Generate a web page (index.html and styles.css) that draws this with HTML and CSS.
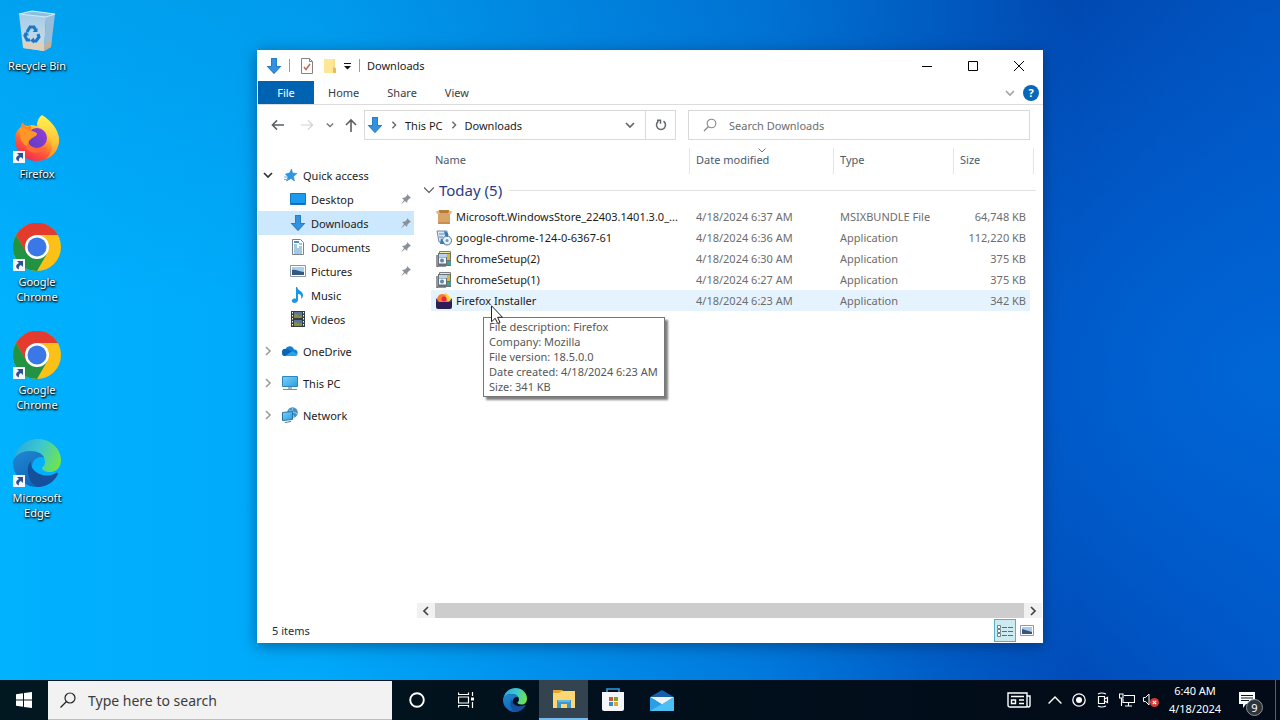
FILE: index.html
```html
<!DOCTYPE html>
<html lang="en">
<head>
<meta charset="utf-8">
<title>Downloads</title>
<link rel="stylesheet" href="styles.css">
</head>
<body>
<svg class="defs" aria-hidden="true">
  <defs>
    <linearGradient id="gBin" x1="0" y1="0" x2="0" y2="1"><stop offset="0" stop-color="#a3cdea"/><stop offset=".65" stop-color="#c3d8e6"/><stop offset="1" stop-color="#d6cdc2"/></linearGradient>
    <linearGradient id="gFox" x1=".85" y1="0" x2=".2" y2="1"><stop offset="0" stop-color="#ffe94a"/><stop offset=".35" stop-color="#ffb62b"/><stop offset=".65" stop-color="#ff5a36"/><stop offset="1" stop-color="#f0205c"/></linearGradient>
    <linearGradient id="gFlame" x1="0" y1="0" x2="0" y2="1"><stop offset="0" stop-color="#fff44f"/><stop offset=".6" stop-color="#ffc53a"/><stop offset="1" stop-color="#ff8a2a"/></linearGradient>
    <linearGradient id="gOrb" x1="0" y1="1" x2="1" y2="0"><stop offset="0" stop-color="#5b3fc4"/><stop offset="1" stop-color="#9a3bd6"/></linearGradient>
    <linearGradient id="gEdgeA" x1="0" y1=".3" x2="1" y2=".6"><stop offset="0" stop-color="#2aa9dc"/><stop offset=".5" stop-color="#3cc8d0"/><stop offset="1" stop-color="#6fe44c"/></linearGradient>
    <linearGradient id="gEdgeB" x1="0" y1="0" x2=".6" y2="1"><stop offset="0" stop-color="#2088d2"/><stop offset="1" stop-color="#0f63b8"/></linearGradient>
    <linearGradient id="gScreen" x1="0" y1="0" x2="1" y2="1"><stop offset="0" stop-color="#7fd0f5"/><stop offset="1" stop-color="#2b9ee0"/></linearGradient>
  </defs>
  <symbol id="bin" viewBox="0 0 48 48">
    <path d="M6 7 19 4 42 7 33 10Z" fill="#8dbfdf"/>
    <path d="M6 7 33 10 31 44 10 41Z" fill="url(#gBin)"/>
    <path d="M33 10 42 7 38 40 31 44Z" fill="#97bdd8"/>
    <path d="M10 35 31.500 37 31 44 10 41Z" fill="#ddd0c0"/><path d="M31.500 37 38.500 33 38 40 31 44Z" fill="#c2b09b"/>
    <path d="M6 7 19 4 42 7 33 10Z" fill="none" stroke="#d5ebf8" stroke-width="1.200"/>
    <g fill="none" stroke="#1a78c8" stroke-width="3"><path d="M14 25l3-5h4l2 4"/><path d="M25 27l1 3-3 4h-3"/><path d="M17 33h-3l-2-4 1-3"/></g>
    <path d="M19.500 25h5v-4ZM21 30.500v6l-4-3ZM10 28.500l3.500-4 2.500 4Z" fill="#1a78c8"/>
  </symbol>
  <symbol id="firefox" viewBox="0 0 48 48">
    <path d="M2 24C2 18 5 14 8 12L9 8c2 2 4 3 6 3l3-1c3 0 7 1 9 2L46 22c1 13-9 24-22 24S2 36 2 24Z" fill="url(#gFox)"/>
    <path d="M29 0c8 5 17 14 17 25 0 9-5 16-13 19 6-6 8-14 4-21-4-6-11-10-13-13 0-4 2-8 5-10Z" fill="url(#gFlame)"/>
    <circle cx="24" cy="23" r="10" fill="url(#gOrb)"/>
    <path d="M8 11c5 1 8 3 11 5 2 1 5 1 5 3s-4 3-6 5c-3 2-3 5-1 8-8-1-12-9-9-21Z" fill="#ff9626"/>
    <path d="M15 28c3 6 13 8 19 3-2 8-17 9-21 2Z" fill="#ff6a35"/>
    <path d="M8 12 10 7c1 3 2 4 4 5l4-2v6Z" fill="#ff8524"/>
  </symbol>
  <symbol id="chrome" viewBox="0 0 48 48">
    <circle cx="24" cy="24" r="24" fill="#fbc116"/>
    <path d="M24 24 3 12A24 24 0 0 1 45 12H24Z" fill="#e33b2e"/>
    <path d="M3.200 12A24 24 0 0 0 24 48L34.400 30 24 24 14 30Z" fill="#229342"/>
    <path d="M3.200 12 13.600 30 24 24V12Z" fill="#e33b2e"/>
    <circle cx="24" cy="24" r="12" fill="#fff"/><circle cx="24" cy="24" r="9.500" fill="#3b78e7"/>
  </symbol>
  <symbol id="edge" viewBox="0 0 48 48">
    <path d="M1 22C2 9 12 0 25 0s23 10 23 21c0 8-5 12-11 12-5 0-8-2-8-4 0-1 3-2 3-6 0-6-6-11-14-11C9 12 3 16 1 22Z" fill="url(#gEdgeA)"/>
    <path d="M0 24c0-7 8-12 17-12 8 0 13 3 14 7-5-3-11 1-12 8-1 9 8 17 19 16-4 3-9 5-14 5C11 48 0 37 0 24Z" fill="url(#gEdgeB)"/>
    <path d="M18 22c-5 5-5 19 6 26 10 0 18-6 21-13 0-1-1-2-2-1-7 4-15 3-20-1-4-3-6-7-5-11Z" fill="#15509c"/>
  </symbol>
  <symbol id="shortcut" viewBox="0 0 12 12"><path d="M0 0h12v12H0Z" fill="#f4f6fa"/><path d="M4 2h6v6L8 6C6 7 5.500 8 6 10.500 2 9 2.500 5.500 6 4Z" fill="#2d4f93"/></symbol>
  <symbol id="arrow" viewBox="0 0 16 16"><path d="M5 0h6v8h4.500L8 16 .5 8H5Z" fill="#3391df"/><path d="M5.500.500h5v8h4L8 15.500 1.500 8.500h4Z" fill="none" stroke="#2277b8" stroke-width=".7"/></symbol>
  <symbol id="chev" viewBox="0 0 10 10"><path d="M1 3l4 4 4-4" fill="none" stroke="currentColor" stroke-width="1.700"/></symbol>
  <symbol id="chevR" viewBox="0 0 10 10"><path d="M3 1l4 4-4 4" fill="none" stroke="currentColor" stroke-width="1.700"/></symbol>
  <symbol id="pin" viewBox="0 0 12 12"><path d="M7 1l4 4-1.500.500L7.500 7.500 7 10 5 8 1 11.500 4 7 2 5l3-.500L7 2.500Z" fill="#8a9097"/></symbol>
  <symbol id="star" viewBox="0 0 16 16"><path d="M9.500 2l1 4L15 6.500l-3.500 3L12.500 14 9 11.500 4.500 14 6 10 3.500 7l4-1Z" fill="#2b97e2" stroke="#1c7fc8" stroke-width=".5"/><path d="M2 10h4M2 12.500h4" stroke="#5cb5ee"/></symbol>
  <symbol id="desktop" viewBox="0 0 16 16"><path d="M.5 2.500h15v11H.5Z" fill="#1c9bee" stroke="#1277bd"/><path d="M1 12.500h14" stroke="#0f5f9e" stroke-width=".8"/></symbol>
  <symbol id="document" viewBox="0 0 16 16"><path d="M2.500.500h8l3 3v12h-11Z" fill="#fff" stroke="#7c8288"/><path d="M4 6h3M9 5h3M4 8h3M9 8h3M4 10h8M4 12h8M4 14h8" stroke="#4692c9"/><path d="M4 3h5" stroke="#4692c9" stroke-width="2"/></symbol>
  <symbol id="picture" viewBox="0 0 16 16"><path d="M.5 2.500h15v11H.5Z" fill="#fff" stroke="#8c96a0"/><path d="M2 4h12v8H2Z" fill="#a8d0ef"/><path d="M2 7c4-1 7 2 12 2v3H2Z" fill="#35597a"/></symbol>
  <symbol id="music" viewBox="0 0 16 16"><path d="M7 0c1 4 6 4 6 8 0 2-1 3-2 4 1-4-1-5-3-5v6c0 2-2 3-4 3s-3-3-1-4 2-1 3 0V0Z" fill="#1897e6"/></symbol>
  <symbol id="video" viewBox="0 0 16 16"><path d="M1 0h14v16H1Z" fill="#333a42"/><path d="M4 1h8v6H4ZM4 9h8v6H4Z" fill="#58759a"/><path d="M4 4c3-4 5 4 8-1v4H4ZM4 12c3-3 5 3 8-1v4H4Z" fill="#8a8c3d"/><path d="M2.500 1v14M13.500 1v14" stroke="#fff" stroke-dasharray="1.500 1.500"/></symbol>
  <symbol id="cloud" viewBox="0 0 16 16"><path d="M3 13a3.500 3.500 0 0 1 .5-7A4.500 4.500 0 0 1 12 6.500a3.300 3.300 0 0 1 1 6.500Z" fill="#0f7fd4"/><path d="M3 13 10 8l5.500 3c0 1-1 2-2.500 2Z" fill="#28a4ea"/><path d="M.5 7.500C2 5 5 6 10 8l-7 5C0 13 0 10 .5 7.500Z" fill="#0b63b4"/></symbol>
  <symbol id="pc" viewBox="0 0 16 16"><path d="M.5 1.500h15v10H.5Z" fill="url(#gScreen)" stroke="#2b87bd"/><path d="M6 12h4v2H6Z" fill="#a8b4be"/><path d="M1 14.500h14" stroke="#7c8a96"/></symbol>
  <symbol id="network" viewBox="0 0 16 16"><circle cx="10.500" cy="5.500" r="5.300" fill="#468fc5"/><path d="M7 3c3 3 5 1 8 4M11 1c-2 3-1 6 1 9" stroke="#9ad4f2" fill="none"/><path d="M.5 5.500l10-1v8l-10 1Z" fill="url(#gScreen)" stroke="#2474ad"/><path d="M3 15.500l6-1" stroke="#637685"/></symbol>
  <symbol id="box" viewBox="0 0 16 16"><path d="M2 4h12v11H2Z" fill="#d9a566"/><path d="M2 4 3 1h10l1 3Z" fill="#b67c3c"/><path d="M0 2h3l1 3H1ZM13 2h3l-1 3h-3Z" fill="#e3b67b"/><path d="M2 13h12v2H2Z" fill="#c98f4d"/></symbol>
  <symbol id="setup" viewBox="0 0 16 16"><path d="M1 1h10v11H3Z" fill="#dce9f4" stroke="#6f8ca8"/><path d="M3 4h5M3 7h4" stroke="#5f87ad"/><circle cx="11" cy="10.500" r="4.500" fill="#e8f1f8" stroke="#52789b"/><path d="M8 1c4 1 5 3 4 6l-3-1M5 8l4 6H4Z" fill="#377abb"/><circle cx="11" cy="10.500" r="1.500" fill="#7795b0"/></symbol>
  <symbol id="installer" viewBox="0 0 16 16"><path d="M3.500.500h11v10h-11Z" fill="#f5e9ae" stroke="#7a7f78"/><path d="M2 2h13v13H2Z" fill="#697176"/><path d="M3 3h8v3H3Z" fill="#b9d4e8"/><path d="M3 6.500h7v6H3Z" fill="#f0f4f7"/><circle cx="6" cy="9.500" r="2" fill="#5289b8"/><path d="M11 3h3v6h-3Z" fill="#d3b93c"/><path d="M11 10h4v4h-4Z" fill="#4b9a97"/><path d="M1 4v12h9" stroke="#2b3339" fill="none"/></symbol>
  <symbol id="foxinst" viewBox="0 0 16 16"><path d="M1 7c0-3 2-6 5-6 5 0 8 3 9 6v3H1Z" fill="#ff7a2b"/><path d="M9 0c3 1 6 4 6 8h-4Z" fill="#ffd43b"/><circle cx="8" cy="6" r="2.500" fill="#e4264f"/><path d="M0 8l3 1h10l3-1v6q0 2-2 2H2q-2 0-2-2Z" fill="#2c1e55"/><path d="M0 5l3 4H0ZM13 9l3-4v4Z" fill="#43306f"/></symbol>
</svg>

<main class="desktop">
  <nav class="shortcuts" aria-label="Desktop">
    <a class="shortcut" href="#"><span class="art"><svg><use href="#bin"/></svg></span>Recycle Bin</a>
    <a class="shortcut" href="#"><span class="art"><svg><use href="#firefox"/></svg><svg class="link"><use href="#shortcut"/></svg></span>Firefox</a>
    <a class="shortcut" href="#"><span class="art"><svg><use href="#chrome"/></svg><svg class="link"><use href="#shortcut"/></svg></span>Google Chrome</a>
    <a class="shortcut" href="#"><span class="art"><svg><use href="#chrome"/></svg><svg class="link"><use href="#shortcut"/></svg></span>Google Chrome</a>
    <a class="shortcut" href="#"><span class="art"><svg><use href="#edge"/></svg><svg class="link"><use href="#shortcut"/></svg></span>Microsoft Edge</a>
  </nav>

  <section class="window" aria-label="Downloads">
    <header class="titlebar">
      <svg class="i16"><use href="#arrow"/></svg>
      <span class="bar"></span>
      <button class="tool" aria-label="Properties"><svg class="i16" viewBox="0 0 16 16"><path d="M2.500.500h8l3 3v12h-11Z" fill="#fdfdfd" stroke="#8a8080"/><path d="M10.500.500v3h3" fill="none" stroke="#8a8080"/><path d="M5 9l2 2.500L11 6" fill="none" stroke="#b86b55" stroke-width="1.500"/></svg></button>
      <button class="tool" aria-label="New folder"><svg class="i16" viewBox="0 0 16 16"><path d="M2 1h11v14H2Z" fill="#fbe08a"/><path d="M2 1h9v14H2Z" fill="#ffe795"/><path d="M11 9l3 1v5h-3Z" fill="#e9bd55"/></svg></button>
      <button class="tool small" aria-label="Customize Quick Access Toolbar"><svg viewBox="0 0 8 8"><path d="M1 1.500h7" stroke="#111"/><path d="M1 4h7L4.500 7.500Z" fill="#111"/></svg></button>
      <span class="bar"></span>
      <h1 class="title">Downloads</h1>
      <div class="controls">
        <button aria-label="Minimize"><svg viewBox="0 0 10 10"><path d="M0 5.500h10" stroke="#000"/></svg></button>
        <button aria-label="Maximize"><svg viewBox="0 0 10 10"><path d="M.5.500h9v9h-9Z" fill="none" stroke="#000"/></svg></button>
        <button aria-label="Close"><svg viewBox="0 0 10 10"><path d="M0 0l10 10M10 0 0 10" stroke="#000"/></svg></button>
      </div>
    </header>
    <nav class="ribbon" aria-label="Ribbon">
      <button class="tab file">File</button><button class="tab">Home</button><button class="tab">Share</button><button class="tab">View</button>
      <button class="expand" aria-label="Expand the ribbon"><svg class="i10"><use href="#chev"/></svg></button>
      <button class="help" aria-label="Help">?</button>
    </nav>
    <div class="address">
      <button class="go" aria-label="Back"><svg viewBox="0 0 14 12"><path d="M14 6H2M6.500 1 1.500 6l5 5" fill="none" stroke="#5a5f64" stroke-width="1.600"/></svg></button>
      <button class="go" aria-label="Forward"><svg viewBox="0 0 14 12"><path d="M0 6h12M7.500 1l5 5-5 5" fill="none" stroke="#cfd1d3" stroke-width="1.300"/></svg></button>
      <button class="go recent" aria-label="Recent locations"><svg class="i8"><use href="#chev"/></svg></button>
      <button class="go up" aria-label="Up"><svg viewBox="0 0 12 14"><path d="M6 14V2M1 7l5-5 5 5" fill="none" stroke="#5a5f64" stroke-width="1.600"/></svg></button>
      <div class="path">
        <svg class="i16"><use href="#arrow"/></svg>
        <svg class="i8 sep"><use href="#chevR"/></svg><a href="#">This PC</a>
        <svg class="i8 sep"><use href="#chevR"/></svg><a href="#">Downloads</a>
        <button class="drop" aria-label="Previous locations"><svg class="i10"><use href="#chev"/></svg></button>
        <button class="refresh" aria-label="Refresh"><svg viewBox="0 0 12 12"><path d="M8.500 2.200a4.500 4.500 0 1 1-5 0M2 1.200h3.500v3.500" fill="none" stroke="#62676c" stroke-width="1.500"/></svg></button>
      </div>
      <label class="find"><svg viewBox="0 0 14 14"><circle cx="8.500" cy="5.500" r="4.300" fill="none" stroke="#858a8f" stroke-width="1.100"/><path d="M5.500 8.500 1 13" stroke="#858a8f" stroke-width="1.200"/></svg><input type="search" placeholder="Search Downloads" aria-label="Search Downloads"></label>
    </div>

    <div class="body">
      <nav class="tree" aria-label="Navigation pane">
        <ul>
          <li><a href="#"><svg class="i10 tw open"><use href="#chev"/></svg><svg class="i16"><use href="#star"/></svg>Quick access</a>
            <ul class="sub">
              <li><a href="#"><svg class="i16"><use href="#desktop"/></svg>Desktop<svg class="pin"><use href="#pin"/></svg></a></li>
              <li><a class="current" href="#"><svg class="i16"><use href="#arrow"/></svg>Downloads<svg class="pin"><use href="#pin"/></svg></a></li>
              <li><a href="#"><svg class="i16"><use href="#document"/></svg>Documents<svg class="pin"><use href="#pin"/></svg></a></li>
              <li><a href="#"><svg class="i16"><use href="#picture"/></svg>Pictures<svg class="pin"><use href="#pin"/></svg></a></li>
              <li><a href="#"><svg class="i16"><use href="#music"/></svg>Music</a></li>
              <li><a href="#"><svg class="i16"><use href="#video"/></svg>Videos</a></li>
            </ul>
          </li>
          <li><a href="#"><svg class="i10 tw"><use href="#chevR"/></svg><svg class="i16"><use href="#cloud"/></svg>OneDrive</a></li>
          <li><a href="#"><svg class="i10 tw"><use href="#chevR"/></svg><svg class="i16"><use href="#pc"/></svg>This PC</a></li>
          <li><a href="#"><svg class="i10 tw"><use href="#chevR"/></svg><svg class="i16"><use href="#network"/></svg>Network</a></li>
        </ul>
      </nav>
      <div class="listing">
        <table class="files">
          <colgroup><col><col class="c-date"><col class="c-type"><col class="c-size"></colgroup>
          <thead><tr><th scope="col">Name</th><th scope="col"><svg class="sort" viewBox="0 0 8 5"><path d="M.5.500 4 4 7.500.500" fill="none" stroke="#6d7277"/></svg>Date modified</th><th scope="col">Type</th><th scope="col">Size</th></tr></thead>
          <tbody>
            <tr><th class="group" colspan="4" scope="colgroup"><div class="grouprow"><svg class="i10" viewBox="0 0 10 10"><path d="M0 2.500l5 5 5-5" fill="none" stroke="#555" stroke-width="1.100"/></svg>Today (5)</div></th></tr>
            <tr><td><div class="name"><svg class="i16"><use href="#box"/></svg>Microsoft.WindowsStore_22403.1401.3.0_...</div></td><td>4/18/2024 6:37 AM</td><td>MSIXBUNDLE File</td><td>64,748 KB</td></tr>
            <tr><td><div class="name"><svg class="i16"><use href="#setup"/></svg>google-chrome-124-0-6367-61</div></td><td>4/18/2024 6:36 AM</td><td>Application</td><td>112,220 KB</td></tr>
            <tr><td><div class="name"><svg class="i16"><use href="#installer"/></svg>ChromeSetup(2)</div></td><td>4/18/2024 6:30 AM</td><td>Application</td><td>375 KB</td></tr>
            <tr><td><div class="name"><svg class="i16"><use href="#installer"/></svg>ChromeSetup(1)</div></td><td>4/18/2024 6:27 AM</td><td>Application</td><td>375 KB</td></tr>
            <tr class="hover"><td><div class="name"><svg class="i16"><use href="#foxinst"/></svg>Firefox Installer
              <div class="tip" role="tooltip">File description: Firefox<br>Company: Mozilla<br>File version: 18.5.0.0<br>Date created: 4/18/2024 6:23 AM<br>Size: 341 KB</div>
              <svg class="cursor" viewBox="0 0 12 19"><path d="M.5.800v16l3.700-3.500 2.500 5.200 2.300-1-2.400-5.200H11.500Z" fill="#fff" stroke="#222"/></svg></div></td><td>4/18/2024 6:23 AM</td><td>Application</td><td>342 KB</td></tr>
          </tbody>
        </table>
        <div class="scroll">
          <button aria-label="Scroll left"><svg class="i10 flip"><use href="#chevR"/></svg></button>
          <span class="thumb"></span>
          <button aria-label="Scroll right"><svg class="i10"><use href="#chevR"/></svg></button>
        </div>
      </div>
    </div>
    <footer class="status">
      <span>5 items</span>
      <button class="view on" aria-label="Details view"><svg viewBox="0 0 16 14"><path d="M.5 1.500h3v3h-3ZM.5 5.500h3v3h-3ZM.5 9.500h3v3h-3Z" fill="#fff" stroke="#6f8488"/><path d="M5 3.500h11M5 7.500h11M5 11.500h11" stroke="#587075" stroke-dasharray="5 1"/></svg></button>
      <button class="view" aria-label="Large icons view"><svg viewBox="0 0 14 11"><path d="M.5.500h13v10H.5Z" fill="#fff" stroke="#8b98ad"/><path d="M2 2h10v7H2Z" fill="#a9cbed"/><path d="M2 4l10 3v2H2Z" fill="#39557d"/></svg></button>
    </footer>
  </section>
</main>

<footer class="taskbar">
  <button class="start" aria-label="Start"><svg viewBox="0 0 16 16"><path d="M0 2.300 7 1.300V7.500H0ZM8 1.100 16 0V7.500H8ZM0 8.500H7V14.700L0 13.700ZM8 8.500H16V16L8 14.900Z" fill="#fff"/></svg></button>
  <label class="search"><svg viewBox="0 0 16 16"><circle cx="10" cy="6" r="5" fill="none" stroke="#222" stroke-width="1.200"/><path d="M6.500 9.500.5 15.500" stroke="#222" stroke-width="1.300"/></svg><input type="search" placeholder="Type here to search" aria-label="Search"></label>
  <div class="apps">
    <button aria-label="Cortana"><svg class="i16" viewBox="0 0 16 16"><circle cx="8" cy="8" r="6.800" fill="none" stroke="#fff" stroke-width="1.900"/></svg></button>
    <button aria-label="Task View"><svg class="i16" viewBox="0 0 16 16"><g fill="none" stroke="#fff" stroke-width="1.200"><path d="M.5.500v2h10v-2M.5 5h10v6H.5ZM.5 15.500v-2h10v2M14.500 0v4M14.500 10v6"/></g><path d="M13 5.500h3v3h-3Z" fill="#fff"/></svg></button>
    <button aria-label="Microsoft Edge"><svg class="i24"><use href="#edge"/></svg></button>
    <button class="active" aria-label="File Explorer"><svg class="i24" viewBox="0 0 24 24"><path d="M1 3h9l2 2v5H1Z" fill="#e2a62f"/><path d="M1 6h6l3-2h13v17H1Z" fill="#fbd672"/><path d="M5 21v-8h14v8h-4v-4H9v4Z" fill="#3c96d0"/><path d="M6 13h12v2H6Z" fill="#66b5e4"/></svg></button>
    <button aria-label="Microsoft Store"><svg class="i24" viewBox="0 0 24 24"><path d="M6 5V1h12v4" fill="none" stroke="#2b9be0" stroke-width="1.600"/><path d="M1 4h22v17q0 2-2 2H3q-2 0-2-2Z" fill="#f3f5f8"/><path d="M8 9h4v4H8Z" fill="#df5237"/><path d="M13 9h4v4h-4Z" fill="#7ba829"/><path d="M8 14h4v4H8Z" fill="#2991d5"/><path d="M13 14h4v4h-4Z" fill="#e4a623"/></svg></button>
    <button aria-label="Mail"><svg class="i24" viewBox="0 0 24 24"><path d="M0 9 12 2l12 7v3H0Z" fill="#155fae"/><path d="M0 9h24L12 17Z" fill="#eef4fa"/><path d="M0 9v14h24Z" fill="#2a9fe5"/><path d="M24 9v14H0Z" fill="#4cc0f5"/><path d="M2 9h20l-10 7Z" fill="#eef4fa"/></svg></button>
  </div>
  <div class="tray">
    <button class="news" aria-label="News and interests"><svg viewBox="0 0 24 16"><g fill="none" stroke="#fff" stroke-width="1.400"><path d="M20 15H3Q1 15 1 13V1h19v12q0 2 1.500 2T23 13V4h-3M4 4.500h13M12 8h5M12 11.500h5M4.500 8h4v3.500h-4Z"/></g></svg></button>
    <button aria-label="Show hidden icons"><svg viewBox="0 0 12 7"><path d="M.5 6.500 6 1l5.500 5.500" fill="none" stroke="#fff" stroke-width="1.200"/></svg></button>
    <button aria-label="Recording"><svg viewBox="0 0 14 14"><circle cx="7" cy="7" r="6.200" fill="none" stroke="#fff" stroke-width="1.300"/><circle cx="7" cy="7" r="3" fill="#fff"/></svg></button>
    <button aria-label="Meet Now"><svg class="i16" viewBox="0 0 14 16"><g fill="none" stroke="#fff" stroke-width="1.200"><path d="M2.500 4.500h6v7h-6ZM8.500 7l3-1.500v5L8.500 9M2 2Q5.500 0 10 2M2 14q3.500 2 8 0"/></g></svg></button>
    <button aria-label="Network"><svg class="i16" viewBox="0 0 16 14"><g fill="none" stroke="#fff" stroke-width="1.100"><path d="M5 2.500h10.500v7H4V6M9.500 10v3M6 13h7M.5 1h3.500v4H.5ZM2.500 5v8"/></g></svg></button>
    <button aria-label="Volume muted"><svg class="i16" viewBox="0 0 16 14"><path d="M.5 4.500h2L6 1v11L2.500 8.500h-2Z" fill="none" stroke="#fff"/><circle cx="11.500" cy="9.500" r="4.500" fill="#d23c36"/><path d="M9.800 7.800l3.400 3.400M13.200 7.800l-3.400 3.400" stroke="#fff" stroke-width="1.200"/></svg></button>
    <button class="clock"><time datetime="2024-04-18T06:40">6:40 AM<br>4/18/2024</time></button>
    <button class="notes" aria-label="9 notifications"><svg class="i16" viewBox="0 0 16 16"><path d="M0 0h16v12H7l-3 4v-4H0Z" fill="#fff"/><path d="M2 3.500h12M2 6h12M2 8.500h8" stroke="#0a1626"/></svg><span class="badge">9</span></button>
  </div>
</footer>
</body>
</html>
```
FILE: styles.css
```css
* { box-sizing: border-box; }
html, body { height: 100%; margin: 0; }
body {
  display: flex;
  flex-direction: column;
  overflow: hidden;
  font: 11px/15px "Noto Sans", "Open Sans", sans-serif;
  color: #1b1b1b;
  background: #0078d7;
}
.defs { position: absolute; width: 0; height: 0; }
svg { display: block; flex: none; }
button { border: 0; padding: 0; background: none; font: inherit; color: inherit; display: flex; align-items: center; justify-content: center; }
a { color: inherit; text-decoration: none; }
ul { list-style: none; margin: 0; padding: 0; }
input { border: 0; outline: 0; padding: 0; background: none; font: inherit; min-width: 0; flex: 1; }
.i8 { width: 8px; height: 8px; }
.i10 { width: 10px; height: 10px; }
.i16 { width: 16px; height: 16px; }
.i24 { width: 24px; height: 24px; }

.desktop {
  position: relative;
  flex: 1;
  min-height: 0;
  background:
    radial-gradient(ellipse 45% 60% at 100% 55%, #0066d6 0%, #0058cc00 100%),
    linear-gradient(180deg, #0050a028 0%, #0050a000 45%),
    linear-gradient(90deg, #00b2ff 0%, #00a8fa 25%, #0078dc 60%, #0047b4 84%, #0053c4 100%);
}
.shortcuts { display: flex; flex-direction: column; width: 74px; padding-top: 7px; }
.shortcut {
  display: flex;
  flex-direction: column;
  align-items: center;
  gap: 3px;
  height: 108px;
  padding: 0 4px;
  text-align: center;
  color: #fff;
  text-shadow: 0 1px 2px #000, 1px 1px 2px #000;
}
.art { position: relative; }
.art svg { width: 48px; height: 48px; }
.art .link { position: absolute; left: 0; bottom: 0; width: 12px; height: 12px; }

.window {
  position: absolute;
  inset: 50px 237px 37px 257px;
  display: flex;
  flex-direction: column;
  padding-left: 1px;
  background: #fff;
  box-shadow: 0 3px 14px #00204880;
}
.titlebar { display: flex; align-items: center; height: 31px; padding: 0 1px 0 8px; }
.titlebar .bar { width: 1px; height: 13px; margin: 0 5px 0 7px; background: #9a9a9a; }
.titlebar .tool { width: 23px; }
.titlebar .small { width: 11px; }
.titlebar .small svg { width: 8px; height: 8px; }
.title { margin: 0 0 0 2px; font-size: 11px; font-weight: 400; }
.controls { display: flex; margin-left: auto; height: 100%; }
.controls button { width: 46px; }
.controls svg { width: 10px; height: 10px; }

.ribbon { display: flex; height: 24px; border-bottom: 1px solid #dcdcdc; color: #3b3b3b; }
.tab { padding: 0 14px; }
.tab.file { width: 56px; background: #0063b1; color: #fff; }
.expand { margin-left: auto; width: 18px; color: #a0a4a8; }
.help { align-self: center; width: 16px; height: 16px; margin: 0 4px; border-radius: 50%; background: #0868b8; color: #fff; font-weight: 700; }

.address { display: flex; align-items: center; height: 40px; padding: 0 13px 0 4px; }
.go { width: 30px; height: 30px; }
.go svg { width: 13px; height: 12px; }
.go.recent { width: 16px; color: #777; }
.go.recent svg { width: 8px; height: 8px; }
.go.up { width: 26px; }
.go.up svg { width: 12px; height: 14px; }
.path { display: flex; align-items: center; flex: 308 1 0; height: 30px; padding-left: 2px; border: 1px solid #d9d9d9; }
.path .sep { margin: 0 7px; color: #666; }
.drop { width: 30px; height: 28px; margin-left: auto; color: #666; }
.refresh { width: 30px; height: 28px; border-left: 1px solid #d9d9d9; }
.refresh svg { width: 12px; height: 12px; }
.find { display: flex; align-items: center; flex: 326 1 0; height: 30px; margin-left: 12px; padding-left: 14px; gap: 12px; border: 1px solid #d9d9d9; }
.find svg { width: 14px; height: 14px; }
.find input::placeholder { color: #6d6d6d; opacity: 1; }

.body { display: flex; flex: 1; min-height: 0; }
.tree { width: 156px; padding-top: 18px; }
.tree a { display: flex; align-items: center; gap: 5px; height: 24px; padding-left: 5px; }
.tree ul > li + li { margin-top: 8px; }
.tree .sub > li + li { margin-top: 0; }
.tree .sub a { padding-left: 32px; }
.tree .tw { margin-right: 4px; color: #a0a0a0; }
.tree .open { color: #333; }
.tree .pin { width: 12px; height: 12px; margin: 0 2px 0 auto; }
.tree .current { background: #cce8ff; }

.listing { display: flex; flex-direction: column; flex: 1; min-width: 0; }
.files { table-layout: fixed; width: calc(100% - 19px); margin: 3px 9px 0 10px; border-spacing: 0; }
.c-date { width: 144px; }
.c-type { width: 120px; }
.c-size { width: 80px; }
.files th { padding: 0 6px; text-align: left; font-weight: 400; }
.files thead th { position: relative; height: 26px; padding-bottom: 4px; border-right: 1px solid #e5e5e5; color: #4c5a6b; }
.files thead th:first-child { padding-left: 11px; }
.sort { position: absolute; top: 0; left: 68px; width: 8px; height: 5px; }
.files .group { height: 32px; padding: 0; }
.grouprow { display: flex; align-items: center; gap: 5px; font-size: 15px; color: #2c3c82; }
.grouprow::after { content: ""; flex: 1; height: 1px; margin: 0 -2px 0 2px; background: #e2e2e2; }
.files td { height: 21px; padding: 0 6px; white-space: nowrap; color: #6d6d6d; background-clip: padding-box; }
.files td:first-child { padding: 0 0 0 5px; border-left: 7px solid transparent; color: #1b1b1b; }
.files td:last-child { padding: 0 4px; border-right: 4px solid transparent; text-align: right; }
.hover td { background-color: #e5f3ff; }
.name { position: relative; display: flex; align-items: center; gap: 4px; }
.tip {
  position: absolute;
  left: 47px;
  top: 24px;
  padding: 1px 6px 2px 5px;
  border: 1px solid #767676;
  background: #fff;
  color: #575757;
  box-shadow: 3px 3px 2px #00000080;
}
.cursor { position: absolute; left: 55px; top: 12px; width: 12px; height: 19px; }

.scroll { display: flex; height: 15px; margin: auto 1px 0 3px; background: #f1f1f1; }
.scroll button { width: 18px; color: #444; }
.scroll .thumb { flex: 1; background: #cdcdcd; }
.flip { transform: scaleX(-1); }
.status { display: flex; align-items: center; height: 25px; padding: 0 5px 0 14px; color: #1e2a3a; }
.status span { flex: 1; }
.view { width: 22px; height: 23px; }
.view.on { background: #cdeaf0; border: 1px solid #5ab0c2; }
.view svg { width: 14px; height: 11px; }
.view.on svg { width: 16px; height: 14px; }

.taskbar { display: flex; height: 40px; color: #fff; background: linear-gradient(90deg, #021821, #01101c 50%, #030a18); }
.taskbar .start { width: 48px; }
.start svg { width: 16px; height: 16px; }
.search { display: flex; align-items: center; width: 344px; margin-top: 1px; padding-left: 12px; gap: 12px; background: #f2f2f2; border-bottom: 1px solid #bdbdbd; font-size: 14px; line-height: 22px; }
.search svg { width: 16px; height: 16px; }
.search input { height: 24px; }
.search input::placeholder { color: #3c3c3c; opacity: 1; }
.apps { display: flex; }
.apps button { width: 49px; }
.apps .active { background: #33434f; border-bottom: 2px solid #76b9ed; }
.tray { display: flex; margin-left: auto; padding-right: 4px; }
.tray button { width: 24px; }
.tray svg { width: 14px; height: 14px; }
.tray .i16 { width: 16px; height: 16px; }
.tray .news { width: 48px; }
.tray .news svg { width: 24px; height: 16px; }
.tray .clock { width: 64px; line-height: 18px; }
.tray .notes { position: relative; width: 49px; padding-right: 8px; border-right: 1px solid #56606c; }
.badge { position: absolute; right: 12px; bottom: 4px; width: 17px; height: 17px; border: 1px solid #8c9197; border-radius: 50%; background: #2e343c; line-height: 15px; text-align: center; }
```
